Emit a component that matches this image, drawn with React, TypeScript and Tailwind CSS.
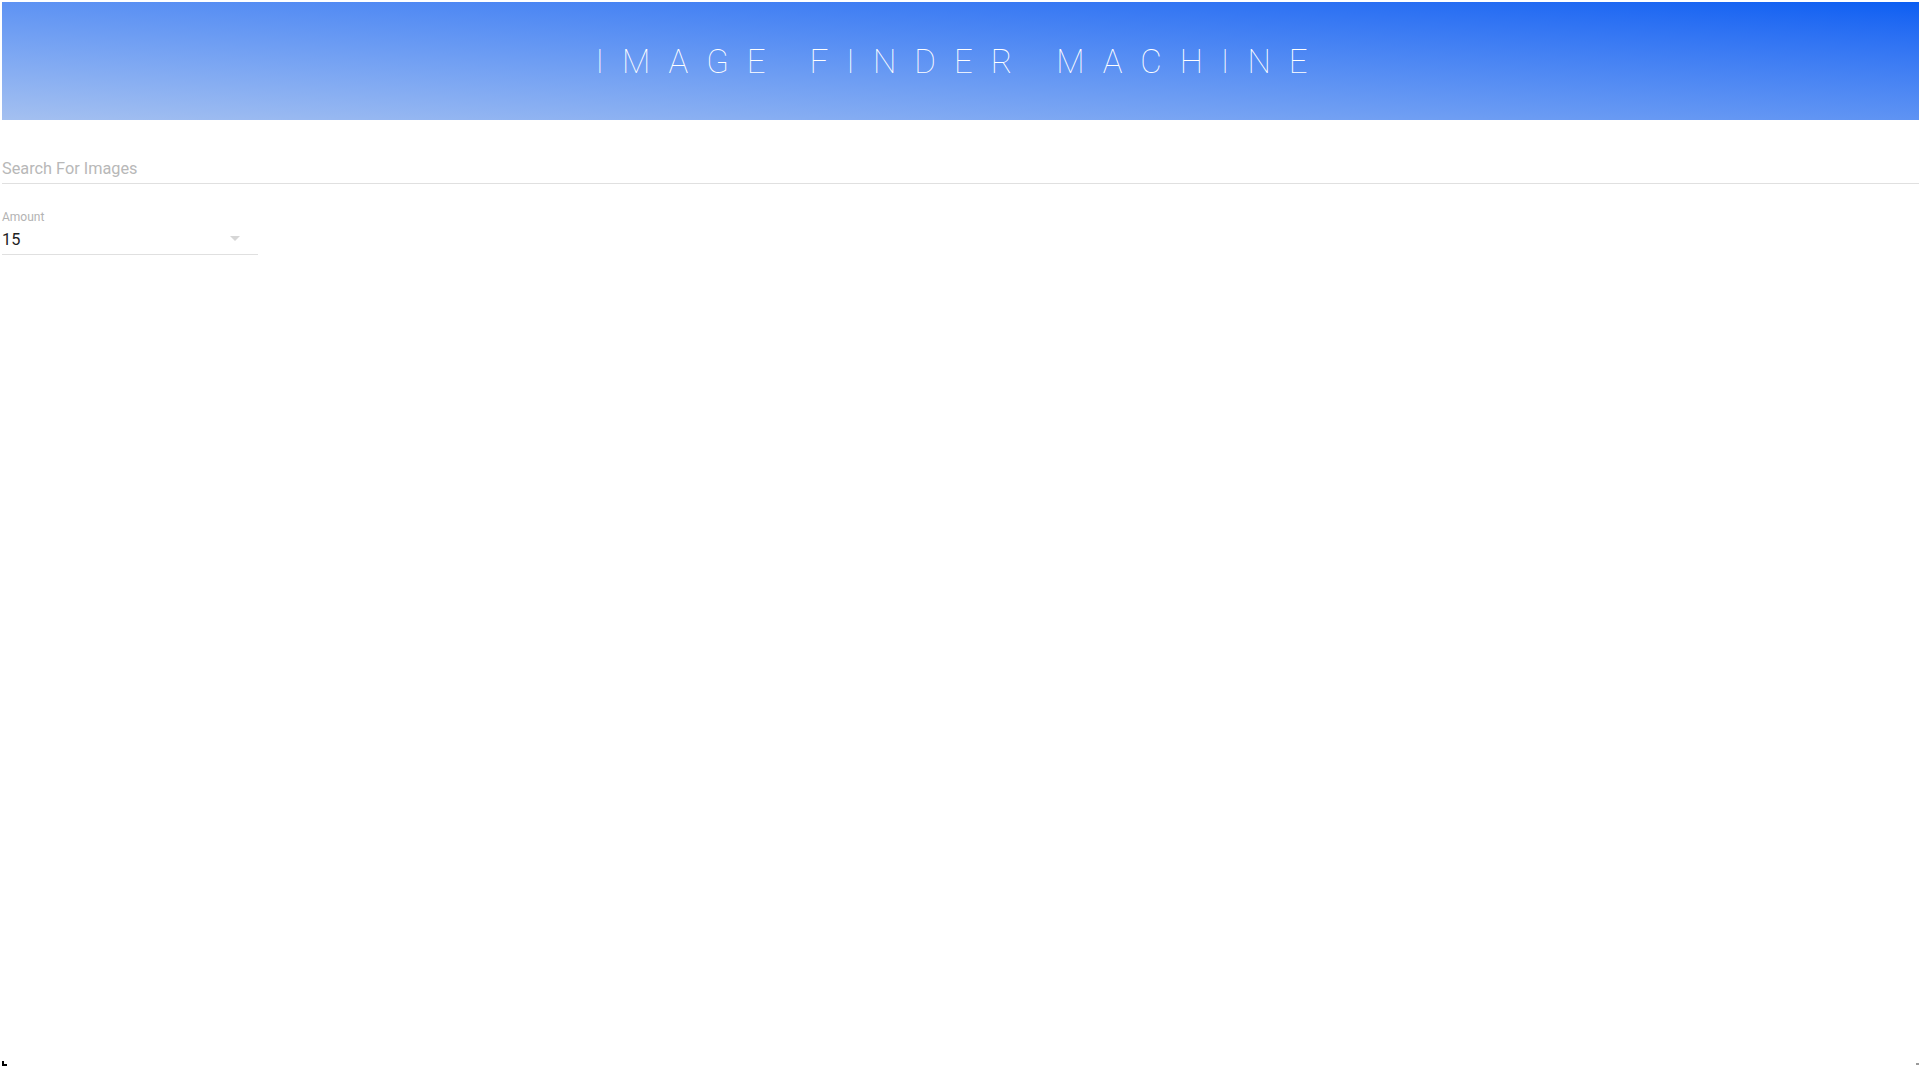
import { useState } from "react";

export default function App(): JSX.Element {
  const [query, setQuery] = useState<string>("");
  const [amount] = useState<number>(15);

  return (
    <div
      className="relative flex min-h-screen flex-col bg-white pl-[2px] pr-[1px] pt-[2px]"
      style={{ fontFamily: "Roboto, 'Liberation Sans', sans-serif" }}
    >
      {/* header bar */}
      <header className="flex h-[118px] w-full items-center justify-center bg-gradient-to-tr from-[#a4c0f0] to-[#0a5ef2]">
        <h1 className="text-[33px] font-thin uppercase leading-none tracking-[18px] text-white">
          Image Finder Machine
        </h1>
      </header>

      {/* search field */}
      <input
        type="text"
        value={query}
        onChange={(e) => setQuery(e.target.value)}
        placeholder="Search For Images"
        className="mt-[36px] block h-[28px] w-full border-b border-[#e0e0e0] bg-transparent pb-[3px] text-[16.3px] text-[#212121] outline-none placeholder:text-[#b8b8b8]"
      />

      {/* amount select */}
      <div className="flex w-[256px] flex-col">
        <label className="mt-[25px] text-[12px] leading-4 text-[#b3b3b3]">Amount</label>
        <div className="mt-[3px] border-b border-[#e0e0e0] pb-[2px]">
          <div className="flex h-[24px] items-center justify-between pr-[18px] text-[16.3px] text-[#212121]">
            <span>{amount}</span>
            <svg width="10" height="5" viewBox="0 0 10 5" className="-mt-[4px]">
              <path d="M0 0l5 5 5-5z" fill="#d6d6d6" />
            </svg>
          </div>
        </div>
      </div>

      {/* window corner marks */}
      <div className="absolute bottom-[2px] left-[2px] h-[5px] w-[2px] bg-black" />
      <div className="absolute bottom-[2px] left-[2px] h-[2px] w-[5px] bg-black" />
      <div className="absolute bottom-[3px] right-[1px] h-[2px] w-[3px] bg-[#9a9a9a]" />
    </div>
  );
}
